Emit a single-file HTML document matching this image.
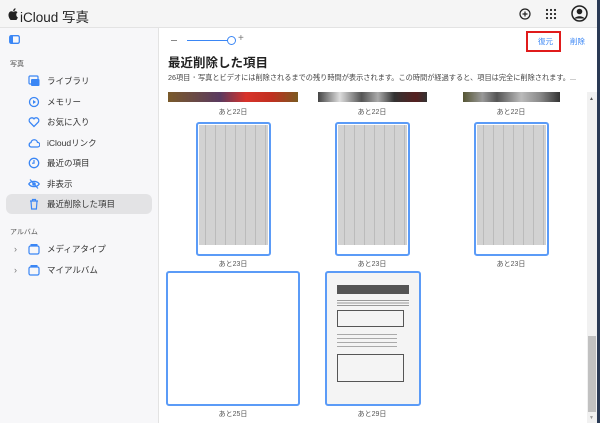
<!DOCTYPE html>
<html><head><meta charset="utf-8"><style>
*{margin:0;padding:0;box-sizing:border-box}
body{width:600px;height:423px;overflow:hidden;font-family:"Liberation Sans","Noto Sans CJK JP",sans-serif;background:#fff;position:relative;color:#333}
.abs{position:absolute}
#hdr{left:0;top:0;width:600px;height:28px;background:#f5f5f5;border-bottom:1px solid #e3e3e3}
#side{left:0;top:28px;width:159px;height:395px;background:#f7f7f9;border-right:1px solid #e3e3e3}
.it{position:absolute;left:28px;font-size:8.5px;color:#333;display:flex;align-items:center}
.it svg{margin-right:7px}
.lbl{font-size:7px;color:#555;position:absolute;width:140px;text-align:center}
.doc{position:absolute;border:2px solid #5b9bf7;border-radius:3px;background:#fff;overflow:hidden}
.pg{position:absolute;left:1px;top:1px;right:1px;bottom:9px;background:#d2d2d2 repeating-linear-gradient(90deg,transparent 0 6px,#bbb 6px 7px,transparent 7px 10px)}
</style></head><body>
<div id="hdr" class="abs"></div>
<svg class="abs" style="left:8px;top:8px" width="10" height="12" viewBox="0 0 10 12"><path d="M8.3 6.4c0-1.4 1.2-2 1.2-2-.7-1-1.7-1.1-2-1.1-.9-.1-1.700.5-2.1.5-.5 0-1.1-.5-1.9-.5C2.5 3.3 1.5 3.9 1 4.9c-1.1 1.9-.3 4.6.8 6.1.5.7 1 1.5 1.8 1.5.7 0 1-.5 1.9-.5s1.1.5 1.9.5 1.3-.8 1.7-1.5c.5-.8.8-1.6.8-1.6s-1.6-.6-1.6-2.5zM6.9 2.2c.4-.5.7-1.2.6-1.9-.6 0-1.3.4-1.7.9-.4.4-.7 1.1-.6 1.8.7 0 1.3-.3 1.700-.8z" fill="#222"/></svg>
<div class="abs" style="left:20px;top:6px;font-size:13.5px;color:#222">iCloud <span style="font-family:'Noto Sans CJK JP',sans-serif">写真</span></div>
<svg class="abs" style="left:519px;top:8px" width="12" height="12" viewBox="0 0 12 12"><circle cx="6" cy="6" r="5" fill="none" stroke="#222" stroke-width="1.2"/><path d="M6 3.5v5M3.5 6h5" stroke="#222" stroke-width="1.2"/></svg>
<svg class="abs" style="left:545px;top:8px" width="12" height="12" viewBox="0 0 12 12" fill="#222"><circle cx="2" cy="2" r="1.1"/><circle cx="6" cy="2" r="1.1"/><circle cx="10" cy="2" r="1.1"/><circle cx="2" cy="6" r="1.1"/><circle cx="6" cy="6" r="1.1"/><circle cx="10" cy="6" r="1.1"/><circle cx="2" cy="10" r="1.1"/><circle cx="6" cy="10" r="1.1"/><circle cx="10" cy="10" r="1.1"/></svg>
<svg class="abs" style="left:571px;top:5px" width="17" height="17" viewBox="0 0 17 17"><circle cx="8.5" cy="8.5" r="7.5" fill="none" stroke="#222" stroke-width="1.5"/><circle cx="8.5" cy="6.5" r="2.8" fill="#222"/><path d="M3.5 13.5c1.5-3 8.5-3 10 0" fill="#222"/></svg>
<div class="abs" style="left:597px;top:0;width:3px;height:423px;background:#2a3a55"></div>

<div id="side" class="abs"></div>
<svg class="abs" style="left:9px;top:35px" width="11" height="9" viewBox="0 0 11 9"><rect x=".7" y=".7" width="9.6" height="7.6" rx="1.5" fill="none" stroke="#3a86f5" stroke-width="1.3"/><rect x="1" y="1" width="3" height="7" fill="#3a86f5"/></svg>
<div class="abs" style="left:10px;top:59px;font-size:7px;color:#555">写真</div>
<div class="abs" style="left:6px;top:194px;width:146px;height:20px;background:#e3e3e5;border-radius:6px"></div>
<div class="it" style="top:75px"><svg width="12" height="12" viewBox="0 0 12 12"><rect x="1" y="1" width="9" height="8" rx="1" fill="none" stroke="#3a86f5" stroke-width="1.2"/><rect x="3" y="4" width="8.5" height="7" rx="1" fill="#3a86f5"/></svg>ライブラリ</div>
<div class="it" style="top:96px"><svg width="12" height="12" viewBox="0 0 12 12"><circle cx="6" cy="6" r="4.5" fill="none" stroke="#3a86f5" stroke-width="1.3"/><path d="M5 4l3 2-3 2z" fill="#3a86f5"/></svg>メモリー</div>
<div class="it" style="top:116px"><svg width="12" height="12" viewBox="0 0 12 12"><path d="M6 10.5L1.8 6.2A2.5 2.5 0 016 2.8a2.5 2.5 0 014.2 3.4z" fill="none" stroke="#3a86f5" stroke-width="1.3"/></svg>お気に入り</div>
<div class="it" style="top:137px"><svg width="12" height="12" viewBox="0 0 12 12"><path d="M3 10h6.5a2.3 2.3 0 000-4.6A3.3 3.3 0 003 5.5 2.3 2.3 0 003 10z" fill="none" stroke="#3a86f5" stroke-width="1.3"/></svg>iCloudリンク</div>
<div class="it" style="top:157px"><svg width="12" height="12" viewBox="0 0 12 12"><circle cx="6" cy="6" r="4.7" fill="none" stroke="#3a86f5" stroke-width="1.3"/><path d="M6 3v3.2H4" fill="none" stroke="#3a86f5" stroke-width="1.2"/></svg>最近の項目</div>
<div class="it" style="top:178px"><svg width="12" height="12" viewBox="0 0 12 12"><path d="M.8 6C3 2.5 9 2.5 11.2 6 9 9.5 3 9.5.8 6z" fill="none" stroke="#3a86f5" stroke-width="1.3"/><circle cx="6" cy="6" r="1.8" fill="#3a86f5"/><path d="M2 1.5l8 9" stroke="#3a86f5" stroke-width="1.1"/></svg>非表示</div>
<div class="it" style="top:198px"><svg width="12" height="12" viewBox="0 0 12 12"><path d="M2 3h8M4.5 3V1.5h3V3M3 3l.6 8h4.8L9 3" fill="none" stroke="#3a86f5" stroke-width="1.2"/></svg>最近削除した項目</div>
<div class="abs" style="left:10px;top:227px;font-size:7px;color:#555">アルバム</div>
<div class="it" style="left:14px;top:243px"><span style="color:#777;margin-right:11px;font-size:9px">›</span><svg width="12" height="12" viewBox="0 0 12 12"><rect x="1" y="3" width="10" height="8" rx="1.5" fill="none" stroke="#3a86f5" stroke-width="1.2"/><rect x="2.5" y="1" width="7" height="2" fill="#3a86f5"/></svg>メディアタイプ</div>
<div class="it" style="left:14px;top:264px"><span style="color:#777;margin-right:11px;font-size:9px">›</span><svg width="12" height="12" viewBox="0 0 12 12"><rect x="1" y="3" width="10" height="8" rx="1.5" fill="none" stroke="#3a86f5" stroke-width="1.2"/><rect x="2.5" y="1" width="7" height="2" fill="#3a86f5"/></svg>マイアルバム</div>

<div class="abs" style="left:171px;top:40px;width:6px;height:1px;background:#888"></div>
<div class="abs" style="left:187px;top:40px;width:43px;height:1px;background:#3a86f5"></div>
<div class="abs" style="left:227px;top:36px;width:9px;height:9px;border:1.2px solid #3a86f5;border-radius:50%;background:#fff"></div>
<div class="abs" style="left:238px;top:33px;font-size:10px;color:#777">+</div>
<div class="abs" style="left:526px;top:31px;width:35px;height:21px;border:2.5px solid #e01b1b"></div>
<div class="abs" style="left:538px;top:36px;font-size:7.5px;color:#3a86f5">復元</div>
<div class="abs" style="left:570px;top:36px;font-size:7.5px;color:#3a86f5">削除</div>
<div class="abs" style="left:168px;top:52px;font-size:12.5px;font-weight:bold;color:#222">最近削除した項目</div>
<div class="abs" style="left:168px;top:73px;font-size:7.2px;color:#444;white-space:nowrap">26項目 ･ 写真とビデオには削除されるまでの残り時間が表示されます。この時間が経過すると、項目は完全に削除されます。...</div>

<div class="abs" style="left:168px;top:92px;width:130px;height:10px;background:linear-gradient(90deg,#7a5a2a,#5a3a60 40%,#d8322a 60%,#c03020 80%,#7a5a20)"></div>
<div class="abs" style="left:318px;top:92px;width:109px;height:10px;background:linear-gradient(90deg,#444,#ddd 20%,#555 40%,#aaa 55%,#333 70%,#552020 90%,#333)"></div>
<div class="abs" style="left:463px;top:92px;width:97px;height:10px;background:linear-gradient(90deg,#553,#999 20%,#555 35%,#bbb 60%,#888 80%,#333)"></div>
<div class="lbl" style="left:163px;top:107px">あと22日</div>
<div class="lbl" style="left:302px;top:107px">あと22日</div>
<div class="lbl" style="left:441px;top:107px">あと22日</div>
<div class="doc" style="left:196px;top:122px;width:75px;height:134px"><div class="pg"></div></div>
<div class="doc" style="left:335px;top:122px;width:75px;height:134px"><div class="pg"></div></div>
<div class="doc" style="left:474px;top:122px;width:75px;height:134px"><div class="pg"></div></div>
<div class="lbl" style="left:163px;top:259px">あと23日</div>
<div class="lbl" style="left:302px;top:259px">あと23日</div>
<div class="lbl" style="left:441px;top:259px">あと23日</div>
<div class="doc" style="left:166px;top:271px;width:134px;height:135px"></div>
<div class="doc" style="left:325px;top:271px;width:96px;height:135px;background:#f4f4f4">
  <div class="abs" style="left:10px;top:12px;width:72px;height:9px;background:#555"></div>
  <div class="abs" style="left:10px;top:27px;width:72px;height:6px;background:repeating-linear-gradient(0deg,#999 0 1px,transparent 1px 2.5px)"></div>
  <div class="abs" style="left:10px;top:37px;width:67px;height:17px;border:1px solid #555"></div>
  <div class="abs" style="left:10px;top:60px;width:60px;height:14px;background:repeating-linear-gradient(0deg,#aaa 0 1px,transparent 1px 4px)"></div>
  <div class="abs" style="left:10px;top:81px;width:67px;height:28px;border:1px solid #555"></div>
</div>
<div class="lbl" style="left:163px;top:409px">あと25日</div>
<div class="lbl" style="left:302px;top:409px">あと29日</div>

<div class="abs" style="left:587px;top:92px;width:10px;height:331px;background:#f1f1f1"></div>
<div class="abs" style="left:589px;top:96px;font-size:5px;color:#555">▲</div>
<div class="abs" style="left:588px;top:336px;width:8px;height:76px;background:#c1c1c1"></div>
<div class="abs" style="left:589px;top:415px;font-size:5px;color:#999">▼</div>
</body></html>
